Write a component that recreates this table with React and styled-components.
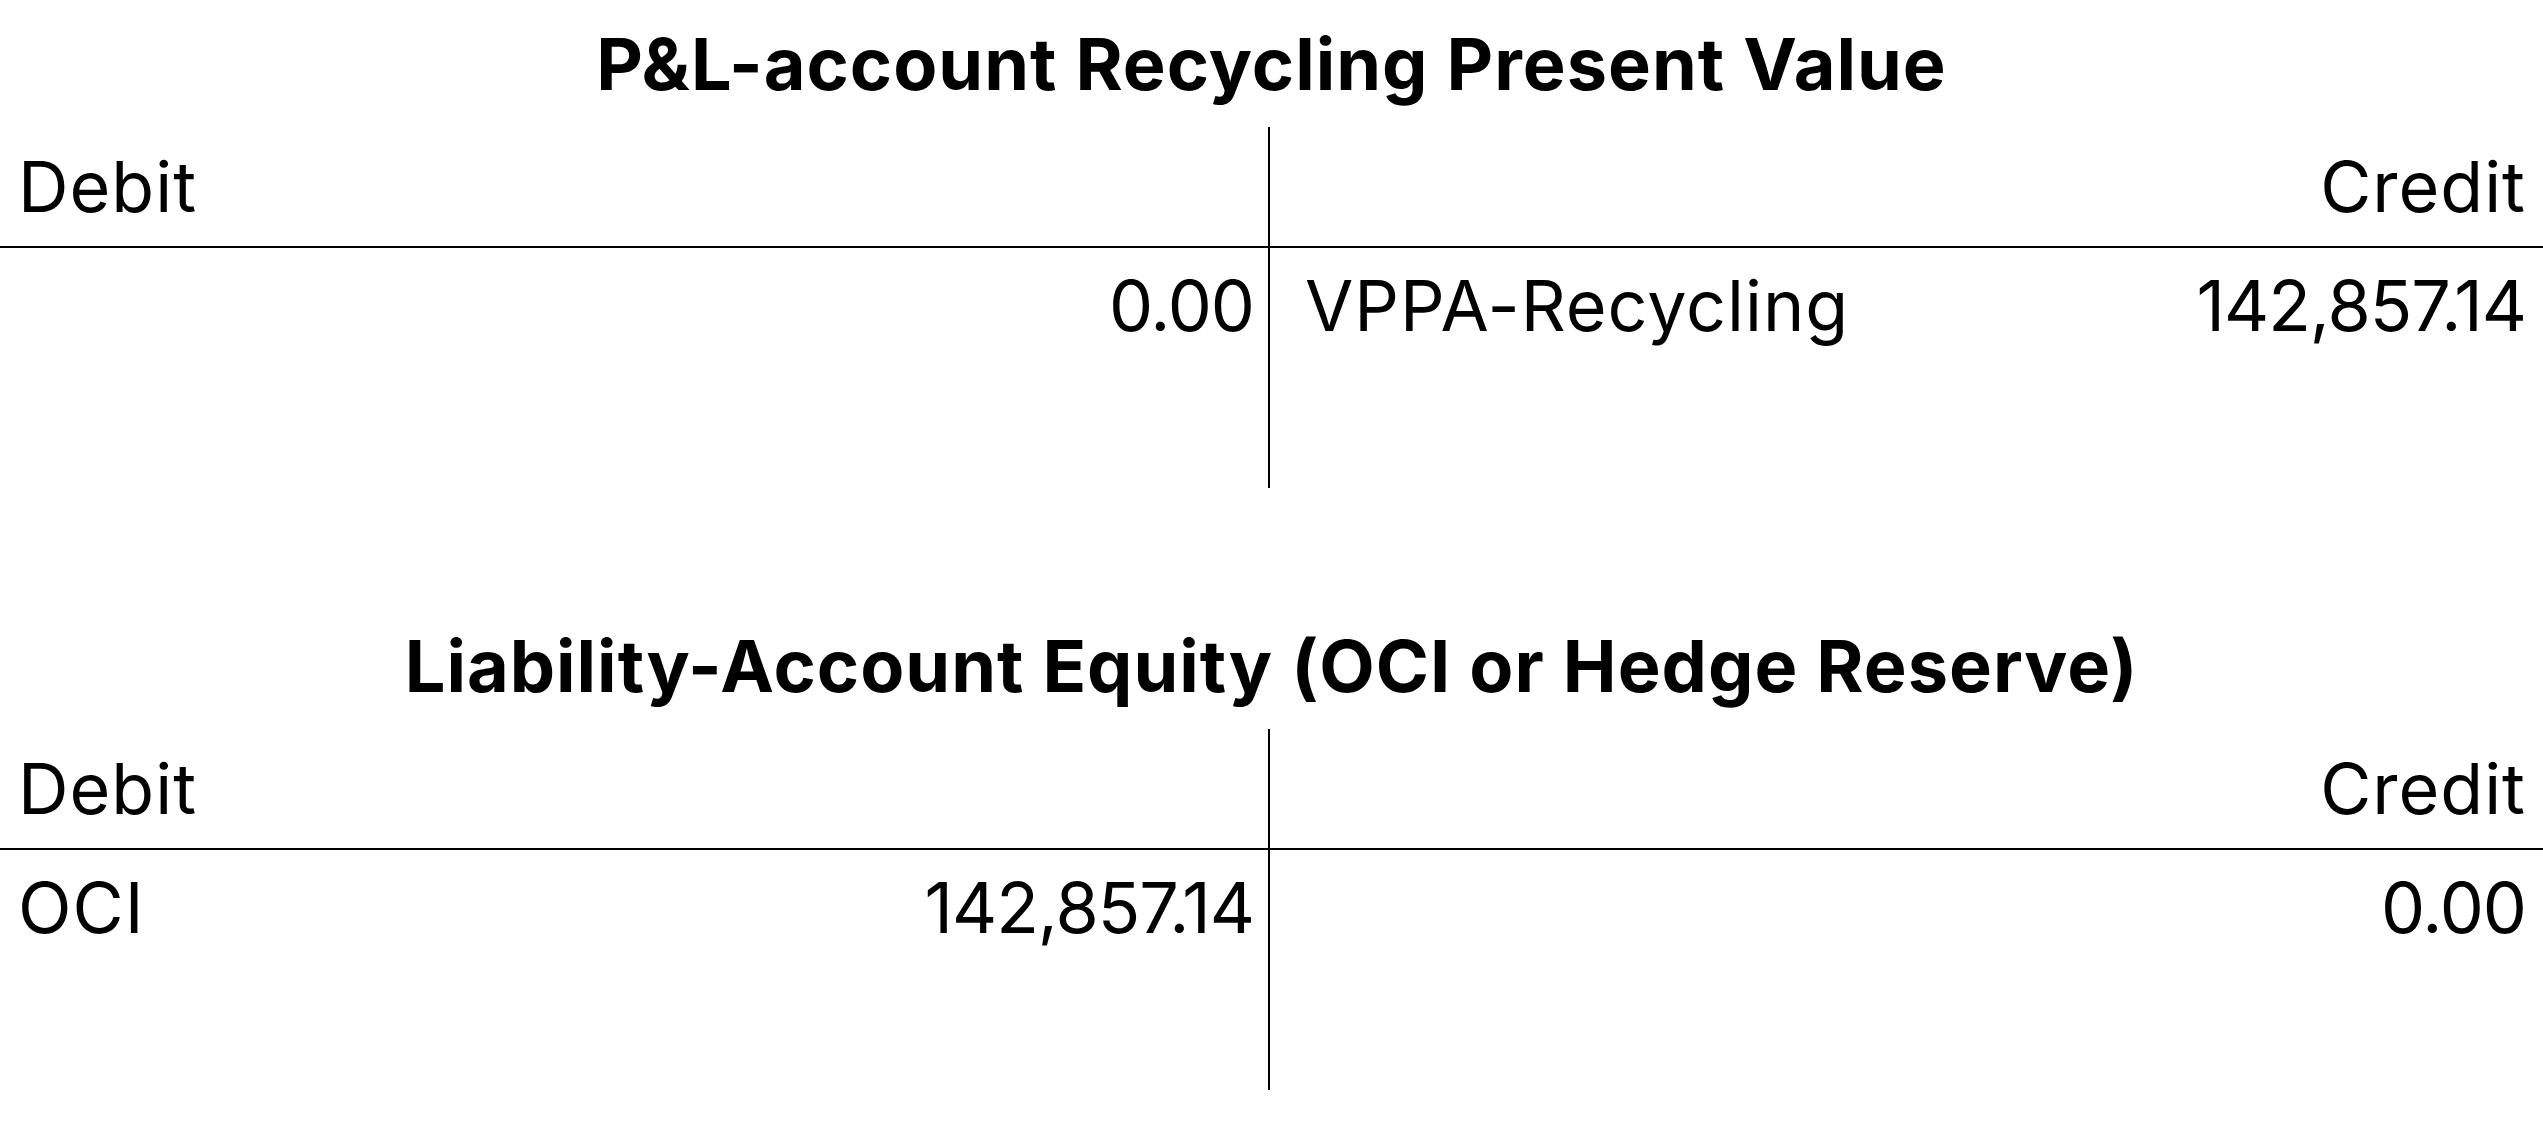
import React from "react";
import styled, { createGlobalStyle } from "styled-components";

const GlobalStyle = createGlobalStyle`
  html, body {
    margin: 0;
    padding: 0;
    background: #ffffff;
  }
  body {
    font-family: Inter, "Liberation Sans", sans-serif;
    color: #000;
  }
`;

const Page = styled.div`
  display: flex;
  flex-direction: column;
  gap: 114px;
  width: 100%;
`;

const Section = styled.section`
  display: flex;
  flex-direction: column;
`;

const Title = styled.h2`
  margin: 0 0 21px;
  padding-top: 22px;
  font-size: 72px;
  line-height: 84px;
  font-weight: 700;
  text-align: center;
  letter-spacing: 1px;
`;

const Ledger = styled.div`
  display: grid;
  grid-template-columns: 1270px 1fr;
  grid-template-rows: 121px 240px;
`;

const Cell = styled.div`
  display: flex;
  align-items: flex-start;
  justify-content: ${(p) => (p.$align === "right" ? "flex-end" : "space-between")};
  gap: 24px;
  box-sizing: border-box;
  padding: ${(p) => (p.$head ? "18px" : "16px")} ${(p) => (p.$side === "left" ? "14px" : "17px")} 0
    ${(p) => (p.$side === "left" ? "18px" : "35px")};
  border-right: ${(p) => (p.$side === "left" ? "2px solid #000" : "none")};
  border-bottom: ${(p) => (p.$head ? "2px solid #000" : "none")};
  font-size: 70px;
  line-height: 84px;
  font-weight: 400;
  letter-spacing: 1px;
`;

const Amount = styled.span`
  margin-left: auto;
  letter-spacing: -1px;
`;

const tables = [
  {
    title: "P&L-account Recycling Present Value",
    debit: { label: "", amount: "0.00" },
    credit: { label: "VPPA-Recycling", amount: "142,857.14" },
  },
  {
    title: "Liability-Account Equity (OCI or Hedge Reserve)",
    debit: { label: "OCI", amount: "142,857.14" },
    credit: { label: "", amount: "0.00" },
  },
];

function TAccount({ title, debit, credit }) {
  return (
    <Section>
      <Title>{title}</Title>
      <Ledger>
        <Cell $head $side="left">
          <span>Debit</span>
        </Cell>
        <Cell $head $side="right" $align="right">
          <span>Credit</span>
        </Cell>
        <Cell $side="left">
          {debit.label && <span>{debit.label}</span>}
          <Amount>{debit.amount}</Amount>
        </Cell>
        <Cell $side="right">
          {credit.label && <span>{credit.label}</span>}
          <Amount>{credit.amount}</Amount>
        </Cell>
      </Ledger>
    </Section>
  );
}

export default function App() {
  return (
    <>
      <GlobalStyle />
      <Page>
        {tables.map((t) => (
          <TAccount key={t.title} {...t} />
        ))}
      </Page>
    </>
  );
}
